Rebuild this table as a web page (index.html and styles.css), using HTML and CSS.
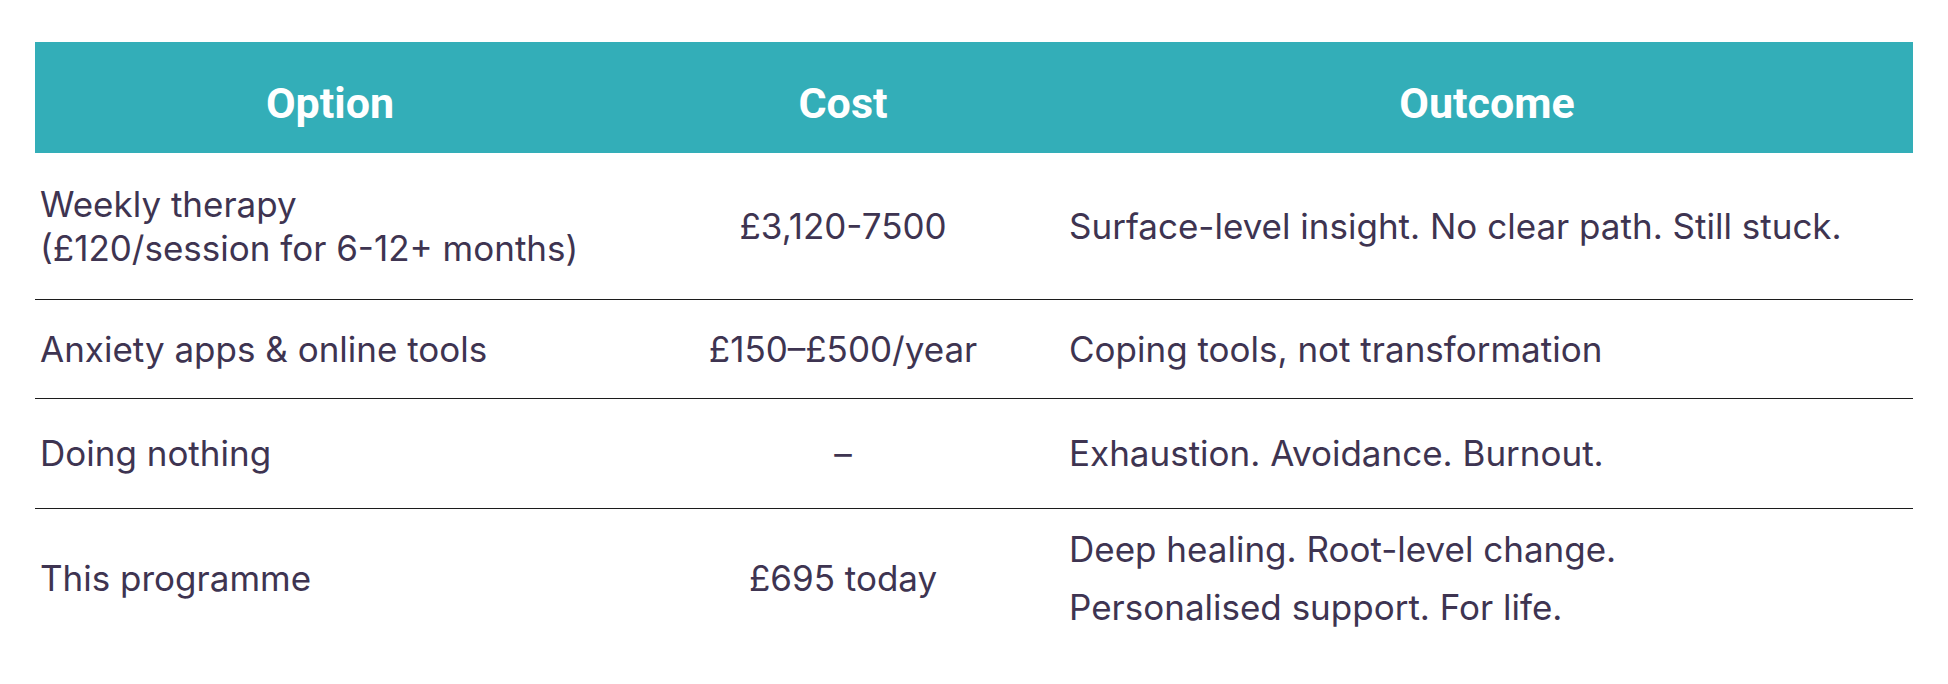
FILE: index.html
```html
<!DOCTYPE html>
<html lang="en">
<head>
<meta charset="utf-8">
<title>Options compared</title>
<link rel="stylesheet" href="styles.css">
</head>
<body>
<div class="wrap">
  <table class="compare">
    <colgroup>
      <col class="c-option">
      <col class="c-cost">
      <col class="c-outcome">
    </colgroup>
    <thead>
      <tr>
        <th>Option</th>
        <th>Cost</th>
        <th>Outcome</th>
      </tr>
    </thead>
    <tbody>
      <tr class="r1">
        <td>Weekly therapy<br>(£120/session for 6-12+ months)</td>
        <td class="cost">£3,120-7500</td>
        <td class="outcome">Surface-level insight. No clear path. Still stuck.</td>
      </tr>
      <tr class="r2">
        <td>Anxiety apps &amp; online tools</td>
        <td class="cost">£150–£500/year</td>
        <td class="outcome">Coping tools, not transformation</td>
      </tr>
      <tr class="r3">
        <td>Doing nothing</td>
        <td class="cost">–</td>
        <td class="outcome">Exhaustion. Avoidance. Burnout.</td>
      </tr>
      <tr class="r4">
        <td>This programme</td>
        <td class="cost">£695 today</td>
        <td class="outcome">
          <p>Deep healing. Root-level change.</p>
          <p>Personalised support. For life.</p>
        </td>
      </tr>
    </tbody>
  </table>
</div>
</body>
</html>
```
FILE: styles.css
```css
html, body {
  margin: 0;
  padding: 0;
  background: #ffffff;
}

.wrap {
  padding: 42px 35px;
}

.compare {
  width: 1878px;
  border-collapse: collapse;
  table-layout: fixed;
  font-family: "Inter", "Noto Sans", sans-serif;
  color: #3e3451;
}

.c-option { width: 590px; }
.c-cost { width: 436px; }
.c-outcome { width: 852px; }

.compare th {
  height: 111px;
  padding: 10px 0 0;
  box-sizing: border-box;
  background: #33aeb8;
  color: #ffffff;
  font-family: "Roboto", "Liberation Sans", sans-serif;
  font-weight: 700;
  font-size: 43px;
  text-align: center;
  vertical-align: middle;
}

.compare td {
  padding: 0 5px;
  font-size: 35px;
  line-height: 44.5px;
  text-align: left;
  vertical-align: middle;
  border-bottom: 1px solid #1c1c1c;
}

.compare td.cost {
  text-align: center;
}

.compare td.outcome {
  padding-left: 8px;
}

.compare tr:last-child td {
  border-bottom: none;
}

.r1 td { height: 146px; }
.r2 td { height: 98px; }
.r3 td { height: 109px; }
.r4 td { height: 138px; }

.compare td p {
  margin: 0;
  line-height: 58px;
}
```
